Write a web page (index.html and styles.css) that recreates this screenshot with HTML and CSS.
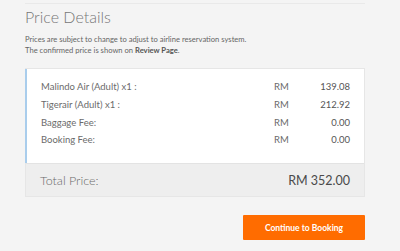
FILE: index.html
```html
<!DOCTYPE html>
<html lang="en">
<head>
    <meta charset="UTF-8">
    <title>Price Details</title>
    <link rel="stylesheet" href="styles.css">
</head>
<body>
    <div class="container">
        <div class="prev-edge"></div>
        <h2 class="title">Price Details</h2>
        <p class="note">Prices are subject to change to adjust to airline reservation system.<br>The confirmed price is shown on <b>Review Page</b>.</p>
        <div class="card">
            <div class="rows">
                <div class="row"><span class="label">Malindo Air (Adult) x1 :</span><span class="cur">RM</span><span class="amt">139.08</span></div>
                <div class="row"><span class="label">Tigerair (Adult) x1 :</span><span class="cur">RM</span><span class="amt">212.92</span></div>
                <div class="row"><span class="label">Baggage Fee:</span><span class="cur">RM</span><span class="amt">0.00</span></div>
                <div class="row"><span class="label">Booking Fee:</span><span class="cur">RM</span><span class="amt">0.00</span></div>
            </div>
            <div class="total">
                <span>Total Price:</span>
                <span class="total-amt">RM 352.00</span>
            </div>
        </div>
        <div class="actions">
            <button class="btn">Continue to Booking</button>
        </div>
    </div>
</body>
</html>
```
FILE: styles.css
```css
*{
    padding: 0;margin: 0;
    box-sizing: border-box;
}
body{
    font-family: Lato, "Open Sans", sans-serif;
    background-color: #f4f4f4;
    color: #666;
}
.container{
    width: 340px;
    margin-left: 25px;
}
.prev-edge{
    height: 4px;
    border-bottom: 1px solid #e9e9e9;
}
.title{
    font-weight: 300;
    font-size: 16px;
    color: #777;
    margin-top: 3px;
    line-height: 20px;
}
.note{
    font-size: 7.6px;
    line-height: 11px;
    margin-top: 7px;
    color: #666;
}
.note b{
    font-weight: 700;
    color: #555;
}
.card{
    margin-top: 12px;
    background: #fff;
    border: 1px solid #e6e6e6;
}
.rows{
    border-left: 2px solid #a9cdec;
    margin-left: -1px;
    padding: 9px 14px 14px 14px;
}
.row{
    display: flex;
    font-size: 9.5px;
    line-height: 17.8px;
    color: #6b6b6b;
}
.label{
    flex: 1;
}
.cur{
    width: 36px;
}
.amt{
    width: 40px;
    text-align: right;
    color: #555;
}
.total{
    display: flex;
    justify-content: space-between;
    align-items: center;
    height: 33px;
    background: #eeeeee;
    border-top: 1px solid #e3e3e3;
    padding: 0 14px;
    font-size: 12.5px;
    font-weight: 300;
    color: #6b6b6b;
}
.total-amt{
    color: #4a4a4a;
    font-weight: 400;
}
.actions{
    display: flex;
    justify-content: flex-end;
    margin-top: 18px;
}
.btn{
    width: 122px;
    height: 25px;
    border: none;
    border-radius: 1px;
    background: #ff6c00;
    color: #fff;
    font-family: Lato, sans-serif;
    font-size: 8.5px;
    font-weight: 700;
}
```
